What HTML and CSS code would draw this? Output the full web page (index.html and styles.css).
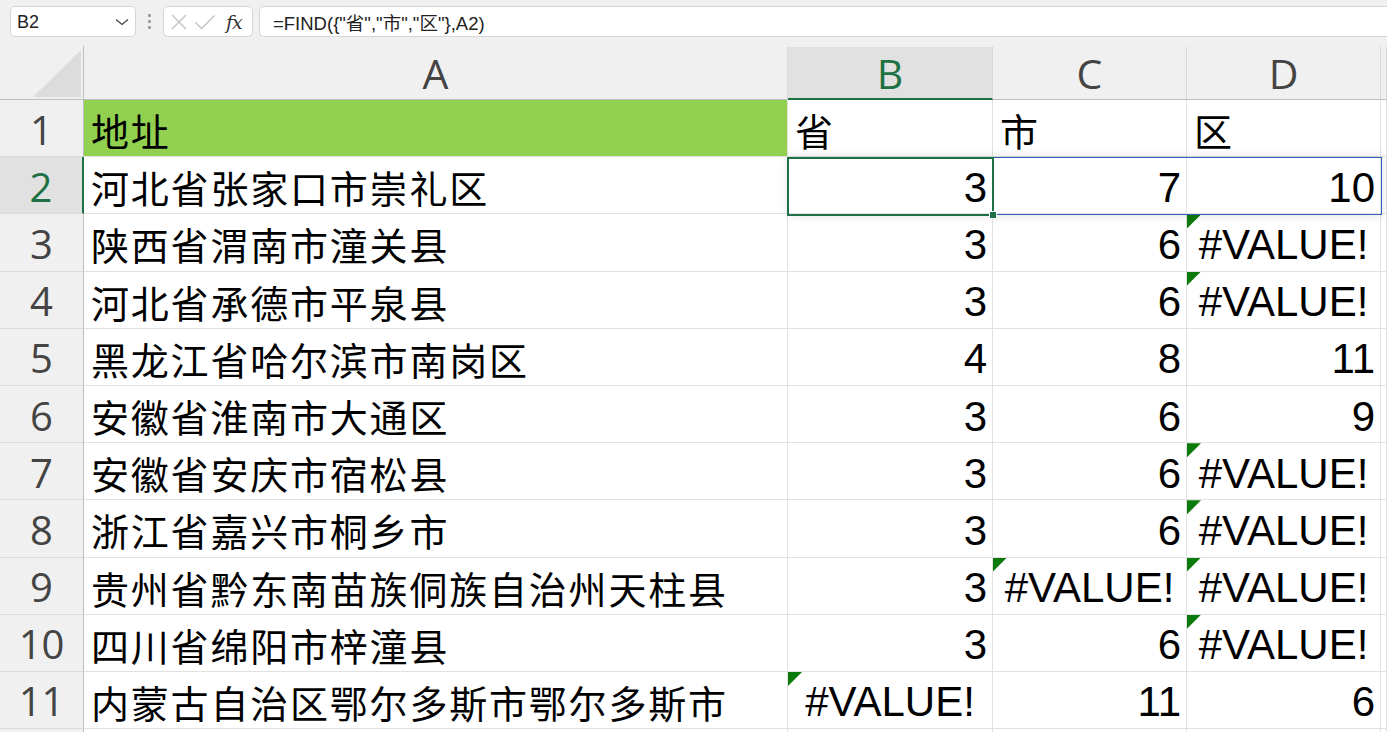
FILE: index.html
```html
<!DOCTYPE html>
<html lang="zh-CN">
<head>
<meta charset="utf-8">
<title>FIND</title>
<link rel="stylesheet" href="styles.css">
</head>
<body>
<div class="toolbar">
  <div class="namebox">
    <span class="name">B2</span>
    <svg class="chev" width="14" height="8" viewBox="0 0 14 8"><path d="M1 1.5 L7 6.5 L13 1.5" fill="none" stroke="#444" stroke-width="1.3"/></svg>
  </div>
  <div class="dots"><i></i><i></i><i></i></div>
  <div class="fxbox">
    <svg width="18" height="18" viewBox="0 0 18 18"><path d="M2 2 L16 16 M16 2 L2 16" stroke="#c2c2c2" stroke-width="1.4" fill="none"/></svg>
    <svg width="22" height="18" viewBox="0 0 22 18"><path d="M1.5 9.5 L7.5 15.5 L20.5 2.5" stroke="#c2c2c2" stroke-width="1.4" fill="none"/></svg>
    <span class="fx">fx</span>
  </div>
  <div class="formula">=FIND({"省","市","区"},A2)</div>
</div>

<div class="sheet-wrap">
  <div class="sheet">
    <div class="hd corner"><div class="tri"></div></div>
    <div class="hd col">A</div>
    <div class="hd col sel-col">B</div>
    <div class="hd col">C</div>
    <div class="hd col">D</div>
    <div class="hd col"></div>

    <div class="hd row">1</div>
    <div class="c txt fill">地址</div>
    <div class="c txt">省</div>
    <div class="c txt">市</div>
    <div class="c txt">区</div>
    <div class="c"></div>

    <div class="hd row sel-row">2</div>
    <div class="c txt">河北省张家口市崇礼区</div>
    <div class="c num">3</div>
    <div class="c num">7</div>
    <div class="c num">10</div>
    <div class="c"></div>

    <div class="hd row">3</div>
    <div class="c txt">陕西省渭南市潼关县</div>
    <div class="c num">3</div>
    <div class="c num">6</div>
    <div class="c err">#VALUE!</div>
    <div class="c"></div>

    <div class="hd row">4</div>
    <div class="c txt">河北省承德市平泉县</div>
    <div class="c num">3</div>
    <div class="c num">6</div>
    <div class="c err">#VALUE!</div>
    <div class="c"></div>

    <div class="hd row">5</div>
    <div class="c txt">黑龙江省哈尔滨市南岗区</div>
    <div class="c num">4</div>
    <div class="c num">8</div>
    <div class="c num">11</div>
    <div class="c"></div>

    <div class="hd row">6</div>
    <div class="c txt">安徽省淮南市大通区</div>
    <div class="c num">3</div>
    <div class="c num">6</div>
    <div class="c num">9</div>
    <div class="c"></div>

    <div class="hd row">7</div>
    <div class="c txt">安徽省安庆市宿松县</div>
    <div class="c num">3</div>
    <div class="c num">6</div>
    <div class="c err">#VALUE!</div>
    <div class="c"></div>

    <div class="hd row">8</div>
    <div class="c txt">浙江省嘉兴市桐乡市</div>
    <div class="c num">3</div>
    <div class="c num">6</div>
    <div class="c err">#VALUE!</div>
    <div class="c"></div>

    <div class="hd row">9</div>
    <div class="c txt">贵州省黔东南苗族侗族自治州天柱县</div>
    <div class="c num">3</div>
    <div class="c err">#VALUE!</div>
    <div class="c err">#VALUE!</div>
    <div class="c"></div>

    <div class="hd row">10</div>
    <div class="c txt">四川省绵阳市梓潼县</div>
    <div class="c num">3</div>
    <div class="c num">6</div>
    <div class="c err">#VALUE!</div>
    <div class="c"></div>

    <div class="hd row">11</div>
    <div class="c txt">内蒙古自治区鄂尔多斯市鄂尔多斯市</div>
    <div class="c err">#VALUE!</div>
    <div class="c num">11</div>
    <div class="c num">6</div>
    <div class="c"></div>

    <div class="hd row"></div>
    <div class="c"></div>
    <div class="c"></div>
    <div class="c"></div>
    <div class="c"></div>
    <div class="c"></div>
  </div>
  <div class="spill"></div>
  <div class="active"><div class="handle"></div></div>
</div>
</body>
</html>
```

FILE: styles.css
```css
html, body {
  margin: 0;
  padding: 0;
  background: #f0f0f0;
  overflow: hidden;
  width: 1387px;
  height: 732px;
}
body {
  font-family: "Liberation Sans", Arial, "Noto Sans CJK SC", sans-serif;
  color: #000;
}

/* toolbar */
.toolbar {
  height: 46px;
  display: flex;
  align-items: flex-start;
  padding: 6px 0 0 10px;
  box-sizing: border-box;
  background: #f0f0f0;
}
.namebox, .fxbox, .formula {
  height: 31px;
  box-sizing: border-box;
  background: #fff;
  border: 1px solid #d6d6d6;
  border-radius: 5px;
  display: flex;
  align-items: center;
}
.namebox {
  width: 126px;
  padding: 0 6px 0 6px;
  justify-content: space-between;
}
.name {
  font-size: 18px;
  color: #222;
  margin-top: 1px;
}
.dots {
  width: 27px;
  height: 31px;
  display: flex;
  flex-direction: column;
  align-items: center;
  justify-content: center;
  gap: 3px;
}
.dots i {
  display: block;
  width: 3px;
  height: 3px;
  background: #9a9a9a;
  border-radius: 1px;
}
.fxbox {
  width: 90px;
  padding: 0 0 0 6px;
  gap: 6px;
}
.fx {
  font-family: "DejaVu Serif", "Liberation Serif", serif;
  font-style: italic;
  font-size: 19px;
  color: #333;
  margin-left: 4px;
  letter-spacing: -1px;
}
.formula {
  flex: 1;
  margin-left: 6px;
  border-right: none;
  border-radius: 5px 0 0 5px;
  padding-left: 13px;
  font-size: 18.5px;
  color: #222;
  font-family: "Liberation Sans", Arial, "Noto Sans CJK SC", sans-serif;
}

/* sheet */
.sheet-wrap {
  position: relative;
}
.sheet {
  display: grid;
  grid-template-columns: 84px 704px 205px 194px 194px 6px;
  grid-template-rows: 54px repeat(11, 57.2px) 20px;
  background: #fff;
}
.hd {
  background: #f0f0f0;
  box-sizing: border-box;
  border-right: 1px solid #d8d8d8;
  border-bottom: 1px solid #d8d8d8;
  color: #444;
  font-family: "Open Sans", "Noto Sans", sans-serif;
  font-size: 41px;
  display: flex;
  align-items: center;
  justify-content: center;
}
.hd.col {
  border-bottom: 1px solid #bdbdbd;
  border-top: 1px solid #f0f0f0;
}
.hd.row {
  border-right: 1px solid #bdbdbd;
  border-bottom: 1px solid #dadada;
  font-size: 40px;
  padding-top: 2px;
}
.corner {
  border-bottom: 1px solid #bdbdbd;
  border-right: 1px solid #bdbdbd;
  position: relative;
}
.corner .tri {
  position: absolute;
  left: 33px;
  top: 4px;
  width: 48px;
  height: 47px;
  background: #dcdcdc;
  clip-path: polygon(100% 0, 100% 100%, 0 100%);
}
.sel-col {
  background: #e1e1e1;
  color: #1e7145;
  border-bottom: 2px solid #1e7145 !important;
}
.sel-row {
  background: #e1e1e1;
  color: #1e7145;
  border-right: 2px solid #1e7145 !important;
}
.c {
  box-sizing: border-box;
  border-right: 1px solid #e1e1e1;
  border-bottom: 1px solid #e1e1e1;
  display: flex;
  align-items: center;
  white-space: nowrap;
  overflow: visible;
  position: relative;
}
.txt {
  font-family: "Noto Sans CJK SC", "Liberation Sans", sans-serif;
  font-size: 38px;
  letter-spacing: 1.8px;
  padding-left: 7px;
  padding-top: 3px;
}
.fill {
  background: #92d050;
}
.num {
  font-family: "Liberation Sans", Arial, sans-serif;
  font-size: 42px;
  justify-content: flex-end;
  padding-right: 5px;
  padding-top: 5px;
}
.err {
  font-family: "Liberation Sans", Arial, sans-serif;
  font-size: 42px;
  justify-content: center;
  padding-top: 5px;
}
.err::before {
  content: "";
  position: absolute;
  left: 0;
  top: 0;
  width: 14px;
  height: 14px;
  background: #0b7a0b;
  clip-path: polygon(0 0, 100% 0, 0 100%);
}

/* selection overlays */
.spill {
  position: absolute;
  left: 788px;
  top: 111px;
  width: 594px;
  height: 58px;
  box-sizing: border-box;
  border: 1px solid #2f5fbd;
  box-shadow: 0 0 10px rgba(0, 0, 0, 0.13);
  pointer-events: none;
}
.active {
  position: absolute;
  left: 787px;
  top: 111px;
  width: 207px;
  height: 59px;
  box-sizing: border-box;
  border: 2px solid #1e7145;
  pointer-events: none;
}
.handle {
  position: absolute;
  right: -5px;
  bottom: -5px;
  width: 6px;
  height: 6px;
  background: #1e7145;
  border: 1px solid #fff;
}
```
